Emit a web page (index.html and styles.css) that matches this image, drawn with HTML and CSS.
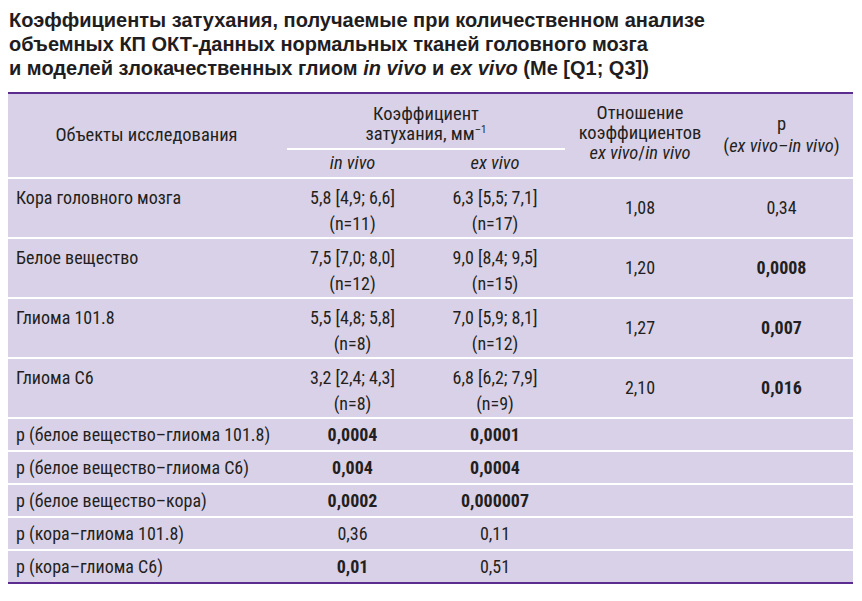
FILE: index.html
```html
<!DOCTYPE html>
<html lang="ru">
<head>
<meta charset="utf-8">
<title>Коэффициенты затухания</title>
<link rel="stylesheet" href="styles.css">
</head>
<body>
<h1 class="title">Коэффициенты затухания, получаемые при количественном анализе<br>объемных КП ОКТ-данных нормальных тканей головного мозга<br>и моделей злокачественных глиом <i>in vivo</i> и <i>ex vivo</i> (Me [Q1; Q3])</h1>
<table class="data">
  <colgroup>
    <col class="c1"><col class="c2"><col class="c3"><col class="c4"><col class="c5">
  </colgroup>
  <thead>
    <tr class="h1">
      <th rowspan="2" class="obj">Объекты исследования</th>
      <th colspan="2" class="coef"><div class="coef-in">Коэффициент<br>затухания, мм<sup>–1</sup></div></th>
      <th rowspan="2" class="ratio">Отношение<br>коэффициентов<br><i>ex vivo</i>/<i>in vivo</i></th>
      <th rowspan="2" class="pcol">p<br>(<i>ex vivo–in vivo</i>)</th>
    </tr>
    <tr class="h2">
      <th><i>in vivo</i></th>
      <th><i>ex vivo</i></th>
    </tr>
  </thead>
  <tbody>
    <tr class="dbl">
      <td class="name">Кора головного мозга</td>
      <td class="val">5,8 [4,9; 6,6]<br>(n=11)</td>
      <td class="val">6,3 [5,5; 7,1]<br>(n=17)</td>
      <td class="mid">1,08</td>
      <td class="mid">0,34</td>
    </tr>
    <tr class="dbl">
      <td class="name">Белое вещество</td>
      <td class="val">7,5 [7,0; 8,0]<br>(n=12)</td>
      <td class="val">9,0 [8,4; 9,5]<br>(n=15)</td>
      <td class="mid">1,20</td>
      <td class="mid"><b>0,0008</b></td>
    </tr>
    <tr class="dbl">
      <td class="name">Глиома 101.8</td>
      <td class="val">5,5 [4,8; 5,8]<br>(n=8)</td>
      <td class="val">7,0 [5,9; 8,1]<br>(n=12)</td>
      <td class="mid">1,27</td>
      <td class="mid"><b>0,007</b></td>
    </tr>
    <tr class="dbl">
      <td class="name">Глиома С6</td>
      <td class="val">3,2 [2,4; 4,3]<br>(n=8)</td>
      <td class="val">6,8 [6,2; 7,9]<br>(n=9)</td>
      <td class="mid">2,10</td>
      <td class="mid"><b>0,016</b></td>
    </tr>
    <tr class="sgl">
      <td class="name">p (белое вещество–глиома 101.8)</td>
      <td class="mid"><b>0,0004</b></td>
      <td class="mid"><b>0,0001</b></td>
      <td></td><td></td>
    </tr>
    <tr class="sgl">
      <td class="name">p (белое вещество–глиома С6)</td>
      <td class="mid"><b>0,004</b></td>
      <td class="mid"><b>0,0004</b></td>
      <td></td><td></td>
    </tr>
    <tr class="sgl">
      <td class="name">p (белое вещество–кора)</td>
      <td class="mid"><b>0,0002</b></td>
      <td class="mid"><b>0,000007</b></td>
      <td></td><td></td>
    </tr>
    <tr class="sgl">
      <td class="name">p (кора–глиома 101.8)</td>
      <td class="mid">0,36</td>
      <td class="mid">0,11</td>
      <td></td><td></td>
    </tr>
    <tr class="sgl last">
      <td class="name">p (кора–глиома С6)</td>
      <td class="mid"><b>0,01</b></td>
      <td class="mid">0,51</td>
      <td></td><td></td>
    </tr>
  </tbody>
</table>
</body>
</html>
```

FILE: styles.css
```css
html, body {
  margin: 0;
  padding: 0;
  background: #ffffff;
}
body {
  margin: 8px;
}
.title {
  margin: 0 0 0 1px;
  font-family: "Liberation Sans", Arial, sans-serif;
  font-weight: bold;
  font-size: 20px;
  line-height: 24px;
  color: #1f1d1e;
}
.title i {
  font-style: italic;
}
.data {
  margin-top: 12px;
  width: 845px;
  border-collapse: collapse;
  table-layout: fixed;
  background: #d9d1e7;
  font-family: "Noto Sans Condensed", "Roboto Condensed", "Arial Narrow", "DejaVu Sans Condensed", sans-serif;
  font-stretch: condensed;
  font-size: 18px;
  color: #231f20;
  border-top: 2px solid #5b2d8e;
  white-space: nowrap;
}
.c1 { width: 277px; }
.c2 { width: 135px; }
.c3 { width: 150px; }
.c4 { width: 140px; }
.c5 { width: 143px; }
.data th {
  font-weight: normal;
  font-size: 18.5px;
  text-align: center;
  vertical-align: middle;
  padding: 0;
  line-height: 20px;
}
.h1 { height: 57px; }
.h2 { height: 28px; }
.h2 th {
  border-bottom: 2px solid #ffffff;
  padding-bottom: 2px;
}
.data thead th[rowspan] {
  border-bottom: 2px solid #ffffff;
}
.obj {
  padding-bottom: 2px !important;
}
.ratio {
  padding-bottom: 6px !important;
}
.pcol {
  line-height: 22px !important;
  padding-bottom: 2px !important;
}
.coef {
  vertical-align: bottom !important;
}
.coef-in {
  margin: 0 5px 0 2px;
  padding-bottom: 4px;
  border-bottom: 2px solid #ffffff;
}
.coef sup {
  font-size: 11px;
  line-height: 0;
  vertical-align: 7px;
}
.data td {
  padding: 0;
  line-height: 20px;
}
.dbl td {
  height: 58px;
  border-bottom: 2px solid #ffffff;
}
.dbl .name, .dbl .val {
  height: 52px;
  vertical-align: top;
  padding-top: 6px;
  line-height: 26px;
}
.sgl td {
  height: 31px;
  border-bottom: 2px solid #ffffff;
  vertical-align: middle;
}
.sgl.last td {
  border-bottom: 2px solid #5b2d8e;
}
.name {
  padding-left: 8px !important;
  text-align: left;
}
.val {
  text-align: center;
}
.mid {
  text-align: center;
  vertical-align: middle;
}
.data b {
  font-weight: bold;
}
```
